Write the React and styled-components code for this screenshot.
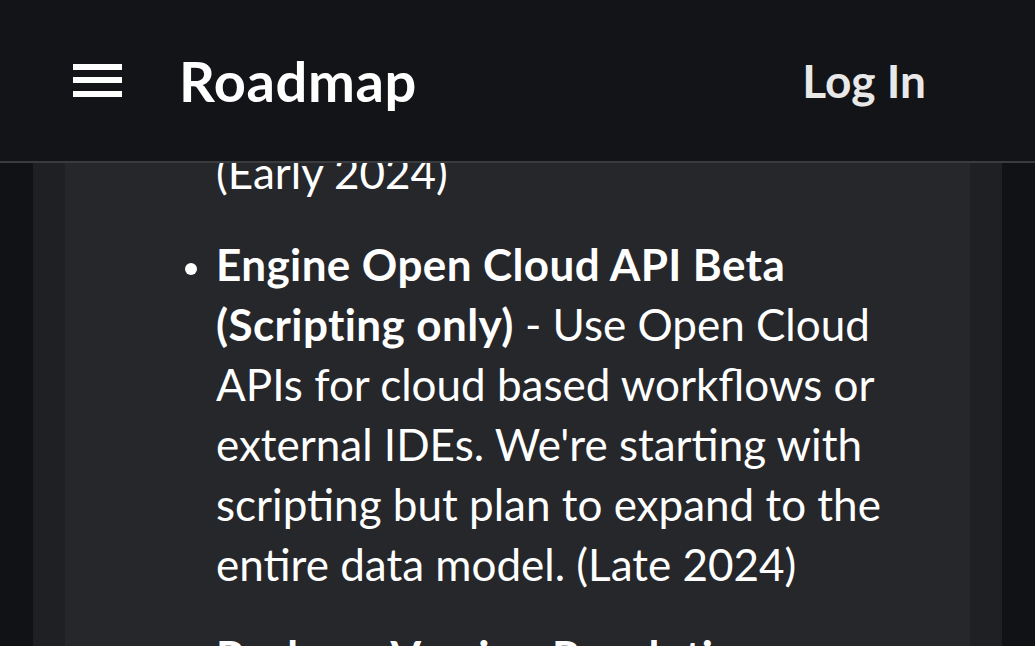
import React from "react";
import styled, { createGlobalStyle } from "styled-components";

const Global = createGlobalStyle`
  html, body {
    margin: 0;
    padding: 0;
    background: #111215;
    overflow: hidden;
  }
  body {
    font-family: Lato, "Noto Sans", sans-serif;
    color: #ffffff;
  }
`;

const Header = styled.header`
  position: fixed;
  top: 0;
  left: 0;
  right: 0;
  height: 161px;
  background: #131418;
  border-bottom: 2px solid #3a3b3f;
  display: flex;
  align-items: center;
  padding: 0 109px 0 73px;
  z-index: 10;
`;

const Burger = styled.button`
  width: 49px;
  height: 33px;
  padding: 0;
  border: none;
  background: transparent;
  display: flex;
  flex-direction: column;
  justify-content: space-between;
  margin-top: -1px;
  cursor: pointer;
`;

const Bar = styled.span`
  display: block;
  height: 6px;
  background: #ffffff;
`;

const Title = styled.h1`
  margin: 0 0 0 57px;
  font-size: 56px;
  font-weight: 700;
  letter-spacing: 0.6px;
  flex: 1;
`;

const LogIn = styled.a`
  font-size: 46px;
  font-weight: 700;
  color: #e8e8e8;
  text-decoration: none;
`;

const Page = styled.div`
  display: flex;
  justify-content: center;
  padding: 0 33px;
  min-height: 646px;
`;

const Panel = styled.main`
  flex: 1;
  background: #1f2024;
  padding: 0 32px;
  display: flex;
`;

const Card = styled.section`
  flex: 1;
  background: #26272b;
  padding: 142px 60px 0 0;
`;

const List = styled.ul`
  margin: 0;
  padding: 0 0 0 151px;
  font-size: 44px;
  line-height: 60px;
`;

const Item = styled.li`
  margin-bottom: 32px;
  list-style: ${(p) => (p.$tail ? "none" : "disc")};
  &::marker {
    font-size: 36px;
  }
`;

const Strong = styled.strong`
  font-weight: 700;
  letter-spacing: 0.4px;
`;

export default function App() {
  return (
    <>
      <Global />
      <Header>
        <Burger aria-label="menu">
          <Bar />
          <Bar />
          <Bar />
        </Burger>
        <Title>Roadmap</Title>
        <LogIn href="#">Log In</LogIn>
      </Header>
      <Page>
        <Panel>
          <Card>
            <List>
              <Item $tail>(Early 2024)</Item>
              <Item>
                <Strong>Engine Open Cloud API Beta (Scripting only)</Strong> - Use
                Open Cloud APIs for cloud based workflows or external IDEs. We're
                starting with scripting but plan to expand to the entire data
                model. (Late 2024)
              </Item>
              <Item>
                <Strong>Package Version Resolution</Strong>
              </Item>
            </List>
          </Card>
        </Panel>
      </Page>
    </>
  );
}
